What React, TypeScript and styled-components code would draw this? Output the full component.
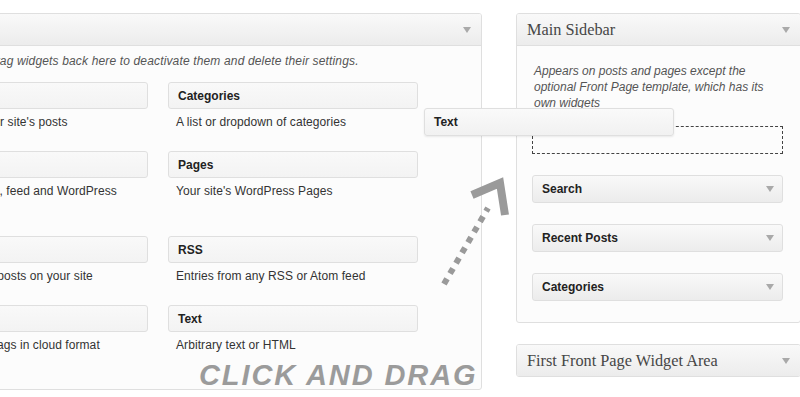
import React from "react";
import styled, { createGlobalStyle } from "styled-components";

const Global = createGlobalStyle`
  html, body { margin: 0; padding: 0; background: #fff; }
  body { font-family: "Liberation Sans", Arial, sans-serif; }
  * { box-sizing: border-box; }
`;

const Stage = styled.div`
  position: relative;
  width: 800px;
  height: 397px;
  overflow: hidden;
  display: flex;
  align-items: flex-start;
  padding-top: 13px;
  background: #fff;
`;

const Panel = styled.section<{ $w: number; $h?: number; $ml?: number }>`
  flex: none;
  width: ${(p) => p.$w}px;
  height: ${(p) => (p.$h ? `${p.$h}px` : "auto")};
  margin-left: ${(p) => p.$ml ?? 0}px;
  border: 1px solid #dfdfdf;
  border-radius: 3px;
  background: #fcfcfc;
  overflow: hidden;
`;

const PanelHeader = styled.header<{ $flat?: boolean }>`
  height: ${(p) => (p.$flat ? 31 : 32)}px;
  display: flex;
  align-items: center;
  justify-content: space-between;
  padding: 0 10px;
  background: linear-gradient(#f9f9f9, #ececec);
  border-bottom: ${(p) => (p.$flat ? "none" : "1px solid #dfdfdf")};
`;

const SerifTitle = styled.h3`
  margin: 0;
  font-family: "Liberation Serif", "Times New Roman", serif;
  font-weight: normal;
  font-size: 16.3px;
  color: #464646;
  white-space: nowrap;
`;

const Caret = styled.span`
  width: 0;
  height: 0;
  border-left: 4px solid transparent;
  border-right: 4px solid transparent;
  border-top: 6px solid #a9a9a9;
  flex: none;
`;

const AvailableBody = styled.div`
  padding: 7px 10px 0 10px;
`;

const Intro = styled.p`
  margin: 0 0 13px;
  font-style: italic;
  font-size: 12px;
  line-height: 16px;
  letter-spacing: 0.15px;
  color: #555;
  white-space: nowrap;
`;

const WidgetGrid = styled.div`
  display: grid;
  grid-template-columns: repeat(3, 250px);
  column-gap: 20px;
  row-gap: 21px;
  align-items: start;
`;

const WidgetItem = styled.div``;

const WidgetBox = styled.div`
  height: 27px;
  display: flex;
  align-items: center;
  padding: 0 9px;
  border: 1px solid #dfdfdf;
  border-radius: 3px;
  background: linear-gradient(#f9f9f9, #f3f3f3);
`;

const WidgetName = styled.span`
  font-weight: bold;
  font-size: 12px;
  color: #222;
`;

const WidgetDesc = styled.p`
  margin: 5px 0 0;
  padding: 0 10px 0 8px;
  font-size: 12px;
  line-height: 16px;
  letter-spacing: 0.08px;
  color: #333;
`;

const Sidebars = styled.div`
  flex: none;
  margin-left: 34px;
  display: flex;
  flex-direction: column;
  gap: 21px;
`;

const SidebarBody = styled.div`
  padding: 17px 15px 20px;
  display: flex;
  flex-direction: column;
  gap: 21px;
`;

const SidebarDesc = styled.p`
  margin: 0 0 -6px;
  padding: 0 2px;
  width: 251px;
  font-style: italic;
  font-size: 12px;
  line-height: 16px;
  color: #555;
`;

const DropZone = styled.div`
  width: 251px;
  height: 28px;
  border: 1px dashed #444;
`;

const SideWidget = styled.div`
  width: 251px;
  height: 28px;
  display: flex;
  align-items: center;
  justify-content: space-between;
  padding: 0 8px 0 9px;
  border: 1px solid #dfdfdf;
  border-radius: 3px;
  background: linear-gradient(#f9f9f9, #ececec);
`;

const Dragged = styled(WidgetBox)`
  position: absolute;
  left: 424px;
  top: 108px;
  width: 250px;
  height: 28px;
  background: linear-gradient(#fafafa, #f1f1f1);
  box-shadow: 0 1px 2px rgba(0, 0, 0, 0.08);
`;

const ArrowArt = styled.svg`
  position: absolute;
  left: 430px;
  top: 170px;
`;

const Callout = styled.div`
  position: absolute;
  left: 199px;
  top: 361px;
  font-family: "Liberation Sans", Arial, sans-serif;
  font-weight: bold;
  font-style: italic;
  font-size: 29px;
  line-height: 29px;
  letter-spacing: 1.9px;
  color: #9b9b9b;
  white-space: nowrap;
`;

const available: [string, string][] = [
  ["Archives", "A monthly archive of your site's posts"],
  ["Calendar", "A calendar of your site's posts"],
  ["Categories", "A list or dropdown of categories"],
  ["Custom Menu", "Use this widget to add one of your custom menus as a widget."],
  ["Meta", "Log in/out, admin, feed and WordPress links"],
  ["Pages", "Your site's WordPress Pages"],
  ["Recent Comments", "The most recent comments"],
  ["Recent Posts", "The most recent posts on your site"],
  ["RSS", "Entries from any RSS or Atom feed"],
  ["Search", "A search form for your site"],
  ["Tag Cloud", "Your most used tags in cloud format"],
  ["Text", "Arbitrary text or HTML"],
];

const sidebarWidgets = ["Search", "Recent Posts", "Categories"];

export default function App() {
  return (
    <>
      <Global />
      <Stage>
        <Panel $w={865} $h={377} $ml={-383}>
          <PanelHeader>
            <SerifTitle>Available Widgets</SerifTitle>
            <Caret />
          </PanelHeader>
          <AvailableBody>
            <Intro>
              Drag widgets from here to a sidebar on the right to activate them. Drag widgets back here to
              deactivate them and delete their settings.
            </Intro>
            <WidgetGrid>
              {available.map(([name, desc]) => (
                <WidgetItem key={name}>
                  <WidgetBox>
                    <WidgetName>{name}</WidgetName>
                  </WidgetBox>
                  <WidgetDesc>{desc}</WidgetDesc>
                </WidgetItem>
              ))}
            </WidgetGrid>
          </AvailableBody>
        </Panel>

        <Sidebars>
          <Panel $w={285} $h={310}>
            <PanelHeader>
              <SerifTitle>Main Sidebar</SerifTitle>
              <Caret />
            </PanelHeader>
            <SidebarBody>
              <SidebarDesc>
                Appears on posts and pages except the optional Front Page template, which has its own widgets
              </SidebarDesc>
              <DropZone />
              {sidebarWidgets.map((w) => (
                <SideWidget key={w}>
                  <WidgetName>{w}</WidgetName>
                  <Caret />
                </SideWidget>
              ))}
            </SidebarBody>
          </Panel>
          <Panel $w={285}>
            <PanelHeader $flat>
              <SerifTitle>First Front Page Widget Area</SerifTitle>
              <Caret />
            </PanelHeader>
          </Panel>
        </Sidebars>

        <Dragged>
          <WidgetName>Text</WidgetName>
        </Dragged>

        <ArrowArt width="90" height="125" viewBox="0 0 90 125">
          <line x1="14" y1="114" x2="58" y2="38" stroke="#9a9a9a" strokeWidth="6" strokeDasharray="6 6" />
          <polyline
            points="42,25 70,13 75,45"
            fill="none"
            stroke="#9a9a9a"
            strokeWidth="8"
            strokeLinejoin="miter"
          />
        </ArrowArt>

        <Callout>CLICK AND DRAG</Callout>
      </Stage>
    </>
  );
}
